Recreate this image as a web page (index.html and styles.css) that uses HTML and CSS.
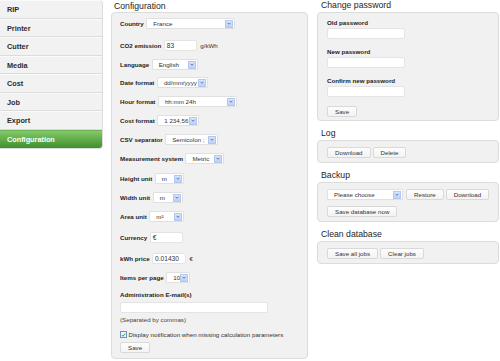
FILE: index.html
```html
<!DOCTYPE html>
<html>
<head>
<meta charset="utf-8">
<link rel="stylesheet" href="styles.css">
</head>
<body>
<div class="page">
  <nav class="side">
    <div class="item">RIP</div>
    <div class="item">Printer</div>
    <div class="item">Cutter</div>
    <div class="item">Media</div>
    <div class="item">Cost</div>
    <div class="item">Job</div>
    <div class="item">Export</div>
    <div class="item active">Configuration</div>
  </nav>

  <section class="mid">
    <h2 class="head">Configuration</h2>
    <div class="panel conf">
      <div class="row r1"><span class="lbl">Country</span><span class="sel w89"><span class="val">France</span><span class="arr"><svg viewBox="0 0 8 8"><path d="M2 3 L4 5 L6 3" /></svg></span></span></div>
      <div class="row r2"><span class="lbl">CO2 emission</span><span class="inp w33">83</span><span class="unit">g/kWh</span></div>
      <div class="row r3"><span class="lbl">Language</span><span class="sel w46"><span class="val">English</span><span class="arr"><svg viewBox="0 0 8 8"><path d="M2 3 L4 5 L6 3" /></svg></span></span></div>
      <div class="row r4"><span class="lbl">Date format</span><span class="sel w51"><span class="val">dd/mm/yyyy</span><span class="arr"><svg viewBox="0 0 8 8"><path d="M2 3 L4 5 L6 3" /></svg></span></span></div>
      <div class="row r5"><span class="lbl">Hour format</span><span class="sel w79"><span class="val">hh:mm 24h</span><span class="arr"><svg viewBox="0 0 8 8"><path d="M2 3 L4 5 L6 3" /></svg></span></span></div>
      <div class="row r6"><span class="lbl">Cost format</span><span class="sel w42"><span class="val">1 234,56</span><span class="arr"><svg viewBox="0 0 8 8"><path d="M2 3 L4 5 L6 3" /></svg></span></span></div>
      <div class="row r7"><span class="lbl">CSV separator</span><span class="sel w53"><span class="val">Semicolon ;</span><span class="arr"><svg viewBox="0 0 8 8"><path d="M2 3 L4 5 L6 3" /></svg></span></span></div>
      <div class="row r8"><span class="lbl">Measurement system</span><span class="sel w39"><span class="val">Metric</span><span class="arr"><svg viewBox="0 0 8 8"><path d="M2 3 L4 5 L6 3" /></svg></span></span></div>
      <div class="row r9"><span class="lbl">Height unit</span><span class="sel w29"><span class="val">m</span><span class="arr"><svg viewBox="0 0 8 8"><path d="M2 3 L4 5 L6 3" /></svg></span></span></div>
      <div class="row r10"><span class="lbl">Width unit</span><span class="sel w30"><span class="val">m</span><span class="arr"><svg viewBox="0 0 8 8"><path d="M2 3 L4 5 L6 3" /></svg></span></span></div>
      <div class="row r11"><span class="lbl">Area unit</span><span class="sel w35"><span class="val">m²</span><span class="arr"><svg viewBox="0 0 8 8"><path d="M2 3 L4 5 L6 3" /></svg></span></span></div>
      <div class="row r12"><span class="lbl">Currency</span><span class="inp w33">€</span></div>
      <div class="row r13"><span class="lbl">kWh price</span><span class="inp w34">0.01430</span><span class="unit">€</span></div>
      <div class="row r14"><span class="lbl">Items per page</span><span class="sel w24"><span class="val">10</span><span class="arr"><svg viewBox="0 0 8 8"><path d="M2 3 L4 5 L6 3" /></svg></span></span></div>
      <div class="lbl block admin">Administration E-mail(s)</div>
      <div class="inp w148 adminin"></div>
      <div class="note">(Separated by commas)</div>
      <div class="check"><span class="box"><svg viewBox="0 0 8 8"><path d="M1.5 4 L3.2 6 L6.8 1.6" /></svg></span><span>Display notification when missing calculation parameters</span></div>
      <div class="btns"><span class="btn">Save</span></div>
    </div>
  </section>

  <section class="right">
    <h2 class="head">Change password</h2>
    <div class="panel pw">
      <div class="lbl block">Old password</div>
      <div class="inp w78"></div>
      <div class="lbl block">New password</div>
      <div class="inp w78"></div>
      <div class="lbl block">Confirm new password</div>
      <div class="inp w78"></div>
      <div class="btns"><span class="btn">Save</span></div>
    </div>

    <h2 class="head sec">Log</h2>
    <div class="panel bar">
      <span class="btn">Download</span><span class="btn">Delete</span>
    </div>

    <h2 class="head sec">Backup</h2>
    <div class="panel bar multi">
      <div class="line">
        <span class="sel w76"><span class="val">Please choose</span><span class="arr"><svg viewBox="0 0 8 8"><path d="M2 3 L4 5 L6 3" /></svg></span></span>
        <span class="btn">Restore</span><span class="btn">Download</span>
      </div>
      <div class="line"><span class="btn">Save database now</span></div>
    </div>

    <h2 class="head sec">Clean database</h2>
    <div class="panel bar">
      <span class="btn">Save all jobs</span><span class="btn">Clear jobs</span>
    </div>
  </section>
</div>
</body>
</html>
```

FILE: styles.css
```css
* { box-sizing: border-box; }
html, body { margin: 0; padding: 0; background: #fff; }
body {
  font-family: "Liberation Sans", Arial, sans-serif;
  font-size: 6.2px;
  color: #333;
  width: 500px;
  height: 361px;
  overflow: hidden;
}
.page { display: flex; align-items: flex-start; }

/* sidebar */
.side {
  width: 103px;
  flex: none;
  background: #f2f2f2;
  border: 1px solid #dcdcdc;
  border-left: none;
  border-top: none;
  border-radius: 0 4px 4px 0;
  overflow: hidden;
}
.item {
  height: 18.5px;
  line-height: 18px;
  padding-left: 7px;
  font-size: 7.3px;
  font-weight: bold;
  color: #2b2b2b;
  border-bottom: 1px solid #dcdcdc;
  border-top: 1px solid #fafafa;
}
.item:last-child { border-bottom: none; }
.item.active {
  color: #fff;
  background: linear-gradient(#84c96a, #3f8f2b);
  border-top-color: #6ab457;
}

/* headings */
.head {
  margin: 0;
  font-size: 8.7px;
  font-weight: normal;
  color: #1e1e1e;
  height: 12px;
  line-height: 12px;
  padding-left: 3px;
}
.right .head { padding-left: 4px; height: 12px; line-height: 10px; }
.head.sec { margin-top: 7px; height: 12px; line-height: 10px; }

/* panels */
.panel {
  background: #f1f1f1;
  border: 1px solid #dcdcdc;
  border-radius: 4px;
}
.mid { width: 197px; margin-left: 8px; flex: none; }
.right { width: 182px; margin-left: 9px; flex: none; }

.conf {
  height: 347px;
  padding: 5px 0 0 8px;
  display: flex;
  flex-direction: column;
  align-items: flex-start;
}
.row {
  display: flex;
  align-items: center;
  gap: 2.5px;
  height: 11px;
  margin-top: 8px;
}
.row.r1 { margin-top: 0; }
.row.r2 { margin-top: 11px; }
.row.r3 { margin-top: 8px; }
.row.r4 { margin-top: 7px; }
.row.r9 { margin-top: 9px; }
.row.r12 { margin-top: 10px; }
.row.r13 { margin-top: 10px; }
.lbl { font-weight: bold; color: #222; white-space: nowrap; }
.lbl.block { display: block; }
.unit { margin-left: 1px; color: #333; }

/* fake select */
.sel {
  display: inline-flex;
  align-items: center;
  justify-content: space-between;
  height: 11px;
  background: #fff;
  border: 1px solid #e0e0e0;
  border-radius: 1px;
  padding: 0 1px 0 6px;
  color: #333;
  white-space: nowrap;
}
.arr {
  width: 8px;
  height: 8px;
  background: linear-gradient(#dbe6fb, #bdd0f4);
  border: 1px solid #b4c8ee;
  display: flex;
  align-items: center;
  justify-content: center;
  flex: none;
}
.arr svg { width: 7px; height: 7px; display: block; }
.arr path { fill: none; stroke: #3c5fa8; stroke-width: 1.1; }

/* fake text input */
.inp {
  display: inline-flex;
  align-items: center;
  height: 11px;
  background: #fff;
  border: 1px solid #e4e4e4;
  border-radius: 2px;
  padding-left: 2px;
  color: #333;
  font-size: 6.6px;
}
.w24 { width: 24px; } .w29 { width: 29px; } .w30 { width: 30px; }
.w33 { width: 33px; } .w34 { width: 34px; } .w35 { width: 35px; }
.w39 { width: 39px; } .w42 { width: 42px; } .w46 { width: 46px; }
.w51 { width: 51px; } .w53 { width: 53px; } .w76 { width: 76px; }
.w78 { width: 78px; } .w79 { width: 79px; } .w89 { width: 89px; }
.w148 { width: 148px; }

.admin { margin-top: 8px; height: 8px; line-height: 8px; }
.adminin { margin-top: 3px; }
.note { margin-top: 2px; height: 9px; line-height: 9px; color: #444; }
.check {
  margin-top: 6px;
  display: flex;
  align-items: center;
  gap: 1.5px;
  height: 9px;
  color: #333;
}
.box {
  width: 7px; height: 7px;
  border: 1px solid #6f8fc8;
  background: #eef3fb;
  display: flex;
  align-items: center;
  justify-content: center;
}
.box svg { width: 6px; height: 6px; display: block; }
.box path { fill: none; stroke: #2e9a2e; stroke-width: 1.4; }
.btns { margin-top: 3px; }
.btn {
  display: inline-flex;
  align-items: center;
  justify-content: center;
  height: 11px;
  padding: 0 7px;
  background: linear-gradient(#fdfdfd, #f3f3f3);
  border: 1px solid #d9d9d9;
  border-radius: 2px;
  color: #333;
  white-space: nowrap;
}

/* right panels */
.pw {
  height: 109px;
  padding: 5px 0 0 9px;
}
.pw .lbl { height: 9px; line-height: 9px; margin-top: 8px; }
.pw .lbl:first-child { margin-top: 0; }
.pw .inp { display: flex; margin-top: 1px; }
.pw .btns { margin-top: 9px; }

.bar {
  padding: 6px 0 0 9px;
  height: 23px;
  display: flex;
  gap: 2px;
}
.bar.multi { flex-direction: column; height: 40px; gap: 6px; }
.line { display: flex; gap: 2px; align-items: center; }
.line .sel { margin-right: 1px; }
```
